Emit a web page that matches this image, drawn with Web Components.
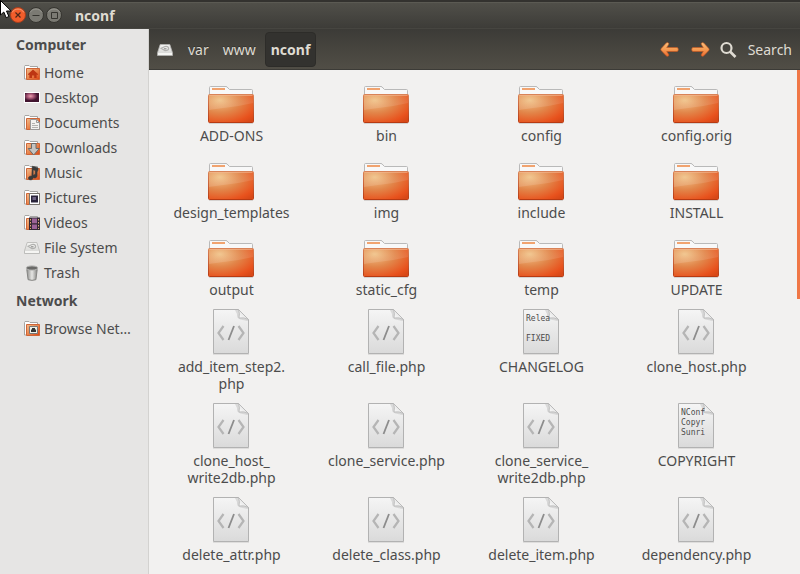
<!DOCTYPE html>
<html lang="en">
<head>
<meta charset="utf-8">
<title>nconf</title>
<style>
html, body { margin: 0; height: 100%; overflow: hidden; }
body { font: 14px/17px "Noto Sans", "Open Sans", sans-serif; color: #4c4c4c; background: #f2f1f0; }
</style>
</head>
<body>
<file-window>
  <title-bar slot="title">nconf</title-bar>
  <side-bar slot="places">
    <place-group heading="Computer">
      <place-item icon="home">Home</place-item>
      <place-item icon="desktop">Desktop</place-item>
      <place-item icon="documents">Documents</place-item>
      <place-item icon="downloads">Downloads</place-item>
      <place-item icon="music">Music</place-item>
      <place-item icon="pictures">Pictures</place-item>
      <place-item icon="videos">Videos</place-item>
      <place-item icon="drive">File System</place-item>
      <place-item icon="trash">Trash</place-item>
    </place-group>
    <place-group heading="Network">
      <place-item icon="network">Browse Net…</place-item>
    </place-group>
  </side-bar>
  <path-bar slot="tools">
    <path-step>var</path-step>
    <path-step>www</path-step>
    <path-step current>nconf</path-step>
  </path-bar>
  <file-item kind="folder">ADD-ONS</file-item>
  <file-item kind="folder">bin</file-item>
  <file-item kind="folder">config</file-item>
  <file-item kind="folder">config.orig</file-item>
  <file-item kind="folder">design_templates</file-item>
  <file-item kind="folder">img</file-item>
  <file-item kind="folder">include</file-item>
  <file-item kind="folder">INSTALL</file-item>
  <file-item kind="folder">output</file-item>
  <file-item kind="folder">static_cfg</file-item>
  <file-item kind="folder">temp</file-item>
  <file-item kind="folder">UPDATE</file-item>
  <file-item kind="code">add_item_step2.<wbr>php</file-item>
  <file-item kind="code">call_file.php</file-item>
  <file-item kind="text" preview="Relea||FIXED">CHANGELOG</file-item>
  <file-item kind="code">clone_host.php</file-item>
  <file-item kind="code">clone_host_<wbr>write2db.php</file-item>
  <file-item kind="code">clone_service.php</file-item>
  <file-item kind="code">clone_service_<wbr>write2db.php</file-item>
  <file-item kind="text" preview="NConf|Copyr|Sunri">COPYRIGHT</file-item>
  <file-item kind="code">delete_attr.php</file-item>
  <file-item kind="code">delete_class.php</file-item>
  <file-item kind="code">delete_item.php</file-item>
  <file-item kind="code">dependency.php</file-item>
</file-window>
<script>
const RESET = `
  :host { display: block; box-sizing: border-box; }
  button, a { font: inherit; color: inherit; background: none; border: 0; margin: 0; padding: 0; text-decoration: none; cursor: default; }
  svg { display: block; flex: none; }`;

const define = (name, render) => customElements.define(name, class extends HTMLElement {
  constructor() {
    super();
    this.attachShadow({ mode: 'open' });
  }
  connectedCallback() {
    this.shadowRoot.innerHTML = render(this);
  }
});

const DRIVE = `
  <defs><linearGradient id="dr" x2="0" y2="1"><stop offset="0" stop-color="#f4f4f2"/><stop offset="1" stop-color="#d2d2d0"/></linearGradient></defs>
  <path d="M3.2 2.5h9.6l2.7 8.3v2.7H.5v-2.7z" fill="url(#dr)" stroke="#b5b5b3" stroke-width=".8"/>
  <path d="M1 11h14v2H1z" fill="#f5f5f3"/>
  <path d="M4.200 6.300 8 4.500q3-.6 3.600 1.500.3 2.500-3.600 2.700z" fill="none" stroke="#b0b0ae" stroke-width="1.200"/>
  <path d="M7 6h2.500v1.500H7z" fill="#a2a2a0"/>`;

const FOLDER = `
  <defs><linearGradient id="fo" x2="1" y2="1"><stop offset="0" stop-color="#f1bd8d"/><stop offset=".5" stop-color="#e9854c"/><stop offset="1" stop-color="#dc4413"/></linearGradient></defs>
  <path d="M.5 14V1.5L1 .5h4l1 1h7.5V14z" fill="#fff" stroke="#a6a6a4"/>
  <path d="M2.5 3.5h13v11h-13z" fill="url(#fo)" stroke="#cf6537"/>`;

const ICONS = {
  home: FOLDER + `<path d="M3.8 9.2 9 4.6l5.2 4.6-.9.8-.7-.6V13h-2.4v-2.6H8V13H5.4V9.4l-.7.6z" fill="#bd3513"/>`,
  desktop: `<defs><radialGradient id="de" cx=".4" cy=".35"><stop offset="0" stop-color="#e9a3ae"/><stop offset=".45" stop-color="#ad5a7a"/><stop offset="1" stop-color="#42142f"/></radialGradient></defs>
    <path d="M0 2h16v11H0z" fill="#fff"/><path d="M1 3h14v9H1z" fill="url(#de)"/>`,
  documents: FOLDER + `<path d="M6.5 4.5h6l3 3v7h-9z" fill="#f2f2f0" stroke="#999"/><path d="M12.5 4.5v3h3" fill="none" stroke="#999"/><path d="M8 8.5h3M8 10.5h6M8 12.5h6" stroke="#b2b2b0"/>`,
  downloads: FOLDER + `<path d="M7.500 3.500h4.500v5h3.300L9.700 15 4.200 8.500h3.300z" fill="#c4c4c2" stroke="#6c6c6a"/>`,
  music: FOLDER + `<path d="M8.2 1.2c2 .2 3.400 1 5.200 1.400 1.200 1 .9 3-.3 4.300V11c-.5 2.600-3.900 2.700-4.100.5 0-1.500 1-2.200 2.200-2V5.500l-2-.6v7.900c-.5 2.800-4.600 2.800-4.800.5 0-1.700 1.800-2.600 3.400-2.200z" fill="#3a3a3a" stroke="#3a3a3a" stroke-width=".5"/>`,
  pictures: FOLDER + `<path d="M5.500 3.500h10v11h-10z" fill="#fff" stroke="#77746f"/><path d="M7 5.500h7v7H7z" fill="#29233a"/><path d="M8.500 7h3.500v3H8.500z" fill="#6d6384"/>`,
  videos: FOLDER + `<path d="M5 2.500h11v12.500H5z" fill="#342934"/><path d="M8 3.500h5v4.700H8zM8 9.500h5V14H8z" fill="#9b6398"/><path d="M6.500 4v10M14.500 4v10" stroke="#dfaa77" stroke-dasharray="1.500 1.500"/>`,
  network: FOLDER + `<path d="M5.500 5.500h8v7h-8z" fill="#edf0e7" stroke="#777"/><path d="M8 7h3v1.500h1V11H7V8.500h1z" fill="#333"/>`,
  drive: DRIVE,
  trash: `<defs><linearGradient id="tr"><stop offset="0" stop-color="#8e8e8c"/><stop offset=".5" stop-color="#e6e6e4"/><stop offset="1" stop-color="#868684"/></linearGradient></defs>
    <path d="M2.800 4.500h10.400l-1.300 10.200Q8 16 4.100 14.700z" fill="url(#tr)" stroke="#858583"/>
    <ellipse cx="8" cy="3" rx="5.800" ry="2.100" fill="#6a6a68" stroke="#b2b2b0"/>`
};

const ARROW = flip => `<svg width="20" height="16" viewBox="0 0 20 16"><defs><linearGradient id="ar" x2="0" y2="1"><stop offset="0" stop-color="#fac07d"/><stop offset=".5" stop-color="#f59b52"/><stop offset="1" stop-color="#ed6b31"/></linearGradient></defs>
  <path ${flip ? 'transform="matrix(-1 0 0 1 20 0)"' : ''} d="M8.400.9Q7.300 0 6.200 1.100L1.200 6.500q-.8 1 0 2l5 5.300q1.100 1 2.200.2.900-1 0-2L6.700 9.500H17q1.300 0 1.300-2T17 5.500H6.700l1.700-2.600q1-1.300 0-2z" fill="url(#ar)" stroke="#c4551f" stroke-width=".6"/></svg>`;

const PAGE = `
  <defs><linearGradient id="pg" x2="0" y2="1"><stop offset="0" stop-color="#f5f5f5"/><stop offset="1" stop-color="#dadada"/></linearGradient>
  <linearGradient id="pc" x1="0" y1="1" x2="1" y2="0"><stop offset="0" stop-color="#fff"/><stop offset=".5" stop-color="#e9e9e9"/><stop offset="1" stop-color="#bbb"/></linearGradient></defs>
  <path d="M6 47.500h36" stroke="#dedddc"/>
  <path d="M6.500 2.500h25l10 10v34h-35z" fill="url(#pg)" stroke="#b2b2b2"/>
  <path d="M30 7l-2-4h3.500l10 10-1 1-7-1.500q-4-.8-3.500-5.500z" fill="#aaa" opacity=".35"/>
  <path d="M31.500 2.500q1.500 4 .5 8.500 5-1 9.500 1.500z" fill="url(#pc)" stroke="#b5b5b5" stroke-width=".8"/>`;

const KINDS = {
  folder: `<defs>
    <radialGradient id="ff" cx=".25" cy=".2" r="1"><stop offset="0" stop-color="#f0c389"/><stop offset=".45" stop-color="#e2864a"/><stop offset=".85" stop-color="#e8521d"/><stop offset="1" stop-color="#d84817"/></radialGradient>
    <linearGradient id="fs" x2="0" y2="1"><stop offset="0" stop-color="#fff" stop-opacity=".04"/><stop offset="1" stop-color="#fff" stop-opacity=".14"/></linearGradient>
    <linearGradient id="fb" x2="0" y2="1"><stop offset="0" stop-color="#d98358"/><stop offset="1" stop-color="#b83a12"/></linearGradient></defs>
    <path d="M2 47.500h44" stroke="#d5d2d0"/>
    <path d="M2.500 20v-8.500q0-1 1-1h15.500q1 0 2 1.500l1.500 1.500h22q1 0 1 1V20z" fill="#f8f8f8" stroke="#b9b9b9"/>
    <path d="M5 12h13v2H5z" fill="#f1a36f"/>
    <rect x="1.500" y="18.500" width="45" height="28" rx="1" fill="url(#ff)" stroke="url(#fb)"/>
    <path d="M2 19h44v8q-13 3-26 4.500T2 34z" fill="url(#fs)"/>
    <path d="M2.500 19.500h43" stroke="#f4ba94" opacity=".6"/>`,
  code: PAGE + `<path d="M16.500 19l-5 7 5 7M31.500 19l5 7-5 7" fill="none" stroke="#b5b5b5" stroke-width="2.200"/><path d="M27 19l-5.500 14" stroke="#8c8c8c" stroke-width="1.800"/>`,
  text: PAGE
};

define('file-window', () => `<style>${RESET}
  :host { display: grid; grid-template: auto minmax(0, 1fr) / 149px minmax(0, 1fr); height: 100vh; position: relative; overflow: hidden; }
  .title { grid-column: 1 / -1; }
  .places { background: #e6e5e4; border-right: 1px solid #d3d2d0; }
  main { display: flex; flex-direction: column; min-height: 0; position: relative; }
  .files { flex: 1; min-height: 0; overflow: hidden; display: grid; grid-template-columns: repeat(auto-fill, 155px); align-content: start; row-gap: 9px; padding: 6px 5px 0; }
  .thumb { position: absolute; right: 0; top: 41px; width: 3px; height: 229px; background: #f07746; }
  .pointer { position: absolute; left: 0; top: 0; }
  </style>
  <div class="title"><slot name="title"></slot></div>
  <div class="places"><slot name="places"></slot></div>
  <main><slot name="tools"></slot><div class="files"><slot></slot></div><div class="thumb"></div></main>
  <svg class="pointer" width="14" height="20" viewBox="0 0 14 20"><path d="M.5.5v14.500l3.300-3 2.400 5.700 2.700-1.200-2.400-5.500h4.700z" fill="#fff" stroke="#000"/></svg>`);

define('title-bar', () => `<style>${RESET}
  :host { display: flex; align-items: center; gap: 2px; height: 29px; padding: 1px 10px 0; color: #dfdbd2; font-weight: 700; background: linear-gradient(#33322f 0 2px, #5b5a53 2px 3px, #504f49 3px, #3d3c38 28px, #464540 28px); }
  button { display: block; }
  h1 { font: inherit; margin: 0 0 0 11px; }
  </style>
  <button aria-label="Close"><svg width="16" height="18" viewBox="0 0 16 18"><circle cx="8" cy="9" r="7.500" fill="#f15d2b" stroke="#a63e1d"/><path d="M2 6.500a7 7 0 0 1 12 0" fill="none" stroke="#f69a72"/><path d="M5.500 6.500l5 5m0-5l-5 5" stroke="#4d2719" stroke-width="1.200"/></svg></button>
  <button aria-label="Minimize"><svg width="16" height="18" viewBox="0 0 16 18"><circle cx="8" cy="9" r="7.500" fill="#7b7a73" stroke="#35342f"/><path d="M2 6.500a7 7 0 0 1 12 0" fill="none" stroke="#96958e"/><path d="M4.500 9.500h7" stroke="#35342f"/></svg></button>
  <button aria-label="Maximize"><svg width="16" height="18" viewBox="0 0 16 18"><circle cx="8" cy="9" r="7.500" fill="#7b7a73" stroke="#35342f"/><path d="M2 6.500a7 7 0 0 1 12 0" fill="none" stroke="#96958e"/><path d="M5.500 6.500h6v6h-6z" fill="none" stroke="#35342f"/></svg></button>
  <h1><slot></slot></h1>`);

define('path-bar', () => `<style>${RESET}
  :host { display: flex; align-items: center; justify-content: space-between; height: 41px; padding: 0 8px; color: #dfdbd2; background: linear-gradient(#3c3b37, #514e46 40px, #3c3b37 40px); }
  nav, .tools { display: flex; align-items: center; }
  nav > button { margin-right: 8px; }
  .tools { gap: 10px; }
  .search { display: flex; align-items: center; gap: 10px; }
  </style>
  <nav aria-label="Path"><button aria-label="Root"><svg width="16" height="16" viewBox="0 0 16 16">${DRIVE}</svg></button><slot></slot></nav>
  <div class="tools">
    <button aria-label="Back">${ARROW(false)}</button>
    <button aria-label="Forward">${ARROW(true)}</button>
    <button class="search"><svg width="18" height="18" viewBox="0 0 18 18"><circle cx="6.500" cy="7" r="5" fill="none" stroke="#dfdbd2" stroke-width="2.200"/><path d="M10 10.500l5.500 5.500" stroke="#dfdbd2" stroke-width="2.600"/></svg>Search</button>
  </div>`);

define('path-step', () => `<style>${RESET}
  button { display: block; box-sizing: border-box; height: 35px; padding: 0 6px; border: 1px solid transparent; border-radius: 4px; text-shadow: 0 -1px #33322e; }
  :host([current]) { margin-left: 2px; }
  :host([current]) button { padding: 0 5px; font-weight: 700; background: #33322f; border-color: #2d2c29; }
  </style><button><slot></slot></button>`);

define('side-bar', () => `<style>${RESET}</style><slot></slot>`);

define('place-group', el => `<style>${RESET}
  h2 { margin: 0; padding: 0 16px; font: inherit; font-weight: 700; line-height: 31px; }
  </style><h2>${el.getAttribute('heading')}</h2><slot></slot>`);

define('place-item', el => `<style>${RESET}
  a { display: flex; align-items: center; gap: 4px; height: 25px; padding-left: 24px; white-space: nowrap; }
  </style><a href="#"><svg width="16" height="16" viewBox="0 0 16 16">${ICONS[el.getAttribute('icon')]}</svg><span><slot></slot></span></a>`);

define('file-item', el => `<style>${RESET}
  :host { display: flex; justify-content: center; align-items: start; }
  a { display: flex; flex-direction: column; align-items: center; gap: 3px; width: 131px; text-align: center; }
  .icon { position: relative; width: 48px; height: 48px; margin-right: 1px; }
  .preview { position: absolute; left: 9px; top: 7px; width: 25px; overflow: hidden; font: 8px/10px "DejaVu Sans Mono", monospace; text-align: left; white-space: pre; }
  </style><a href="#"><div class="icon"><svg width="48" height="48" viewBox="0 0 48 48">${KINDS[el.getAttribute('kind')]}</svg>${
    el.hasAttribute('preview') ? `<div class="preview">${el.getAttribute('preview').split('|').join('\n')}</div>` : ''
  }</div><span class="label"><slot></slot></span></a>`);
</script>
</body>
</html>
